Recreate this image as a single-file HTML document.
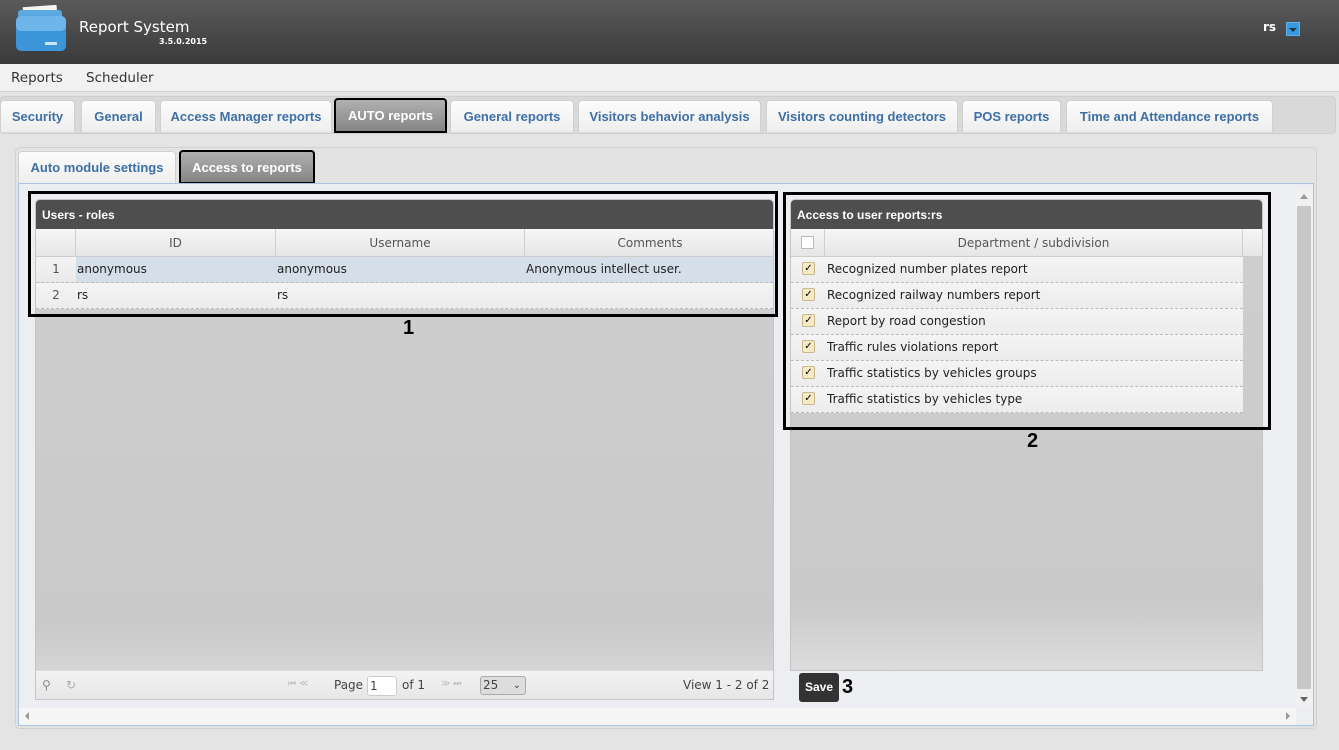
<!DOCTYPE html>
<html><head><meta charset="utf-8"><style>
*{box-sizing:border-box;margin:0;padding:0}
body{width:1339px;height:750px;overflow:hidden;background:#e4e4e4;font-family:"DejaVu Sans","Liberation Sans",sans-serif;font-size:12px;position:relative;color:#222}
.a{position:absolute}
.hdr{left:0;top:0;width:1339px;height:64px;background:linear-gradient(#5a5a5a,#3a3a3a)}
.menu{left:0;top:64px;width:1339px;height:28px;background:#f1f1f1;border-bottom:1px solid #d0d0d0;font-size:13.5px;color:#333}
.tabbar{left:0;top:96px;width:1336px;height:38px;background:#d9d9d9;border:1px solid #cfcfcf;border-radius:4px}
.tab{position:absolute;top:100px;height:32px;background:linear-gradient(#fcfcfc,#eeeeee);border:1px solid #d0d0d0;border-bottom:none;border-radius:4px 4px 0 0;color:#3e6fa5;font-weight:bold;font-size:13px;text-align:center;line-height:31px;font-family:"Liberation Sans",sans-serif;white-space:nowrap;overflow:hidden}
.act{background:linear-gradient(#b0b0b0,#858585);color:#fff;border:2px solid #000;line-height:32px}
.inner{left:15px;top:147px;width:1302px;height:582px;background:#e3e3e3;border:1px solid #d0d0d0;border-radius:5px}
.content{left:18px;top:183px;width:1296px;height:543px;background:#eceef1;border:1px solid #a9c4e0}
.grid{background:linear-gradient(#cfcfcf 0%,#c9c9c9 85%,#dcdcdc 100%);border:1px solid #c5c5c5;border-radius:5px 5px 0 0;overflow:hidden}
.gh{height:29px;background:#4e4e4e;color:#fff;font-weight:bold;font-size:12px;line-height:30px;padding-left:6px;font-family:"Liberation Sans",sans-serif}
.ch{height:28px;background:linear-gradient(#f6f6f6,#e6e6e6);border-bottom:1px solid #ccc;position:relative;color:#555;font-size:12px}
.ch div{position:absolute;top:0;height:28px;line-height:28px;text-align:center;border-right:1px solid #d0d0d0}
.row{height:26px;position:relative;border-bottom:1px dashed #bbb;background:linear-gradient(#f4f4f4,#ececec);font-size:12px;line-height:25px}
.row div{position:absolute;top:0}
.cb{position:absolute;left:11px;top:5px;width:13px;height:13px;background:#f7e9c4;border:1px solid #c9b88a;border-radius:2px;font-size:10px;line-height:11px;text-align:center;color:#000;font-weight:bold}
.box{border:3px solid #000}
.num{font-family:"Liberation Sans",sans-serif;font-weight:bold;font-size:20px;color:#000}
</style></head><body>
<div class="a hdr"></div>
<svg class="a" style="left:15px;top:5px" width="52" height="46" viewBox="0 0 52 46">
<rect x="8" y="1" width="34" height="12" fill="#f4f4f4" transform="rotate(-4 25 7)"/>
<rect x="3" y="5" width="44" height="10" rx="3" fill="#5aa9e0"/>
<rect x="1" y="11" width="50" height="35" rx="5" fill="#3b95d8"/>
<rect x="1" y="11" width="50" height="15" rx="5" fill="#6cb6ea"/>
<rect x="30" y="37" width="12" height="3" rx="1" fill="#cfe6f7"/>
</svg>
<div class="a" style="left:79px;top:18px;color:#fff;font-size:15px;font-family:'DejaVu Sans',sans-serif">Report System</div>
<div class="a" style="left:159px;top:37px;color:#fff;font-size:8px;font-weight:bold">3.5.0.2015</div>
<div class="a" style="left:1263px;top:20px;color:#fff;font-size:12px;font-weight:bold">rs</div>
<div class="a" style="left:1286px;top:22px;width:14px;height:14px;background:#3a9ae0;border:1px solid #5fb0ea"><div style="margin:5px auto 0;width:0;height:0;border-left:4px solid transparent;border-right:4px solid transparent;border-top:4px solid #234"></div></div>
<div class="a menu"><span class="a" style="left:11px;top:6px">Reports</span><span class="a" style="left:86px;top:6px">Scheduler</span></div>
<div class="a tabbar"></div>
<div class="tab" style="left:0;width:75px">Security</div>
<div class="tab" style="left:81px;width:75px">General</div>
<div class="tab" style="left:160px;width:172px">Access Manager reports</div>
<div class="tab act" style="left:334px;width:113px;top:98px;height:35px">AUTO reports</div>
<div class="tab" style="left:450px;width:124px">General reports</div>
<div class="tab" style="left:578px;width:183px">Visitors behavior analysis</div>
<div class="tab" style="left:766px;width:192px">Visitors counting detectors</div>
<div class="tab" style="left:962px;width:99px">POS reports</div>
<div class="tab" style="left:1066px;width:207px">Time and Attendance reports</div>
<div class="a inner"></div>
<div class="tab" style="left:18px;top:151px;width:158px">Auto module settings</div>
<div class="tab act" style="left:179px;top:150px;width:136px;height:34px">Access to reports</div>
<div class="a content"></div>
<div class="a" style="left:1296px;top:188px;width:16px;height:519px;background:#f0f0f0"><div style="position:absolute;left:1px;top:18px;width:14px;height:483px;background:#c8c8c8"></div><div style="position:absolute;left:4px;top:6px;border-left:4px solid transparent;border-right:4px solid transparent;border-bottom:5px solid #999"></div><div style="position:absolute;left:4px;bottom:5px;border-left:4px solid transparent;border-right:4px solid transparent;border-top:5px solid #666"></div></div>
<div class="a" style="left:19px;top:708px;width:1277px;height:17px;background:#f5f5f5"><div style="position:absolute;left:6px;top:4px;border-top:4px solid transparent;border-bottom:4px solid transparent;border-right:4px solid #999"></div><div style="position:absolute;right:6px;top:4px;border-top:4px solid transparent;border-bottom:4px solid transparent;border-left:4px solid #999"></div></div>
<div class="a grid" style="left:35px;top:199px;width:739px;height:501px">
<div class="gh">Users - roles</div>
<div class="ch"><div style="left:0;width:40px"></div><div style="left:40px;width:200px">ID</div><div style="left:240px;width:249px">Username</div><div style="left:489px;width:250px;border:none">Comments</div></div>
<div class="row" style="background:#d5dfea"><div style="left:0;width:40px;text-align:center;background:linear-gradient(#f4f4f4,#e9e9e9);color:#555">1</div><div style="left:41px">anonymous</div><div style="left:241px">anonymous</div><div style="left:490px">Anonymous intellect user.</div></div>
<div class="row"><div style="left:0;width:40px;text-align:center;color:#555">2</div><div style="left:41px">rs</div><div style="left:241px">rs</div></div>
<div class="a" style="left:0;top:470px;width:737px;height:30px;background:linear-gradient(#f3f3f3,#e6e6e6);border-top:1px solid #ddd;font-size:12px;color:#444">
<span class="a" style="left:6px;top:7px;color:#888">⚲</span><span class="a" style="left:30px;top:7px;color:#aaa">↻</span>
<span class="a" style="left:252px;top:8px;color:#bbb;font-size:9px">⏮ ≪</span>
<span class="a" style="left:298px;top:7px">Page</span>
<div class="a" style="left:331px;top:5px;width:30px;height:20px;background:#fff;border:1px solid #ccc;border-radius:3px;padding-left:2px;line-height:18px">1</div>
<span class="a" style="left:366px;top:7px">of 1</span>
<span class="a" style="left:405px;top:8px;color:#bbb;font-size:9px">≫ ⏭</span>
<div class="a" style="left:444px;top:5px;width:46px;height:19px;background:#ddd;border:1px solid #aaa;border-radius:3px;padding-left:2px;line-height:17px">25 <span style="position:absolute;right:4px;font-size:10px">⌄</span></div>
<span class="a" style="left:647px;top:7px">View 1 - 2 of 2</span>
</div>
</div>
<div class="a box" style="left:28px;top:191px;width:750px;height:126px"></div>
<div class="a num" style="left:403px;top:317px">1</div>
<div class="a grid" style="left:790px;top:199px;width:473px;height:472px">
<div class="gh">Access to user reports:rs</div>
<div class="ch"><div style="left:0;width:34px"><span style="display:inline-block;width:13px;height:13px;background:#fff;border:1px solid #bbb;margin-top:7px"></span></div><div style="left:34px;width:418px">Department / subdivision</div></div>
<div style="width:452px">
<div class="row"><span class="cb">✓</span><div style="left:36px">Recognized number plates report</div></div>
<div class="row"><span class="cb">✓</span><div style="left:36px">Recognized railway numbers report</div></div>
<div class="row"><span class="cb">✓</span><div style="left:36px">Report by road congestion</div></div>
<div class="row"><span class="cb">✓</span><div style="left:36px">Traffic rules violations report</div></div>
<div class="row"><span class="cb">✓</span><div style="left:36px">Traffic statistics by vehicles groups</div></div>
<div class="row"><span class="cb">✓</span><div style="left:36px">Traffic statistics by vehicles type</div></div>
</div>
</div>
<div class="a box" style="left:783px;top:192px;width:488px;height:238px"></div>
<div class="a num" style="left:1027px;top:430px">2</div>
<div class="a" style="left:799px;top:673px;width:40px;height:29px;background:#333;border-radius:3px;color:#fff;font-weight:bold;font-size:12px;text-align:center;line-height:28px;font-family:'Liberation Sans',sans-serif">Save</div>
<div class="a num" style="left:842px;top:676px">3</div>
</body></html>
